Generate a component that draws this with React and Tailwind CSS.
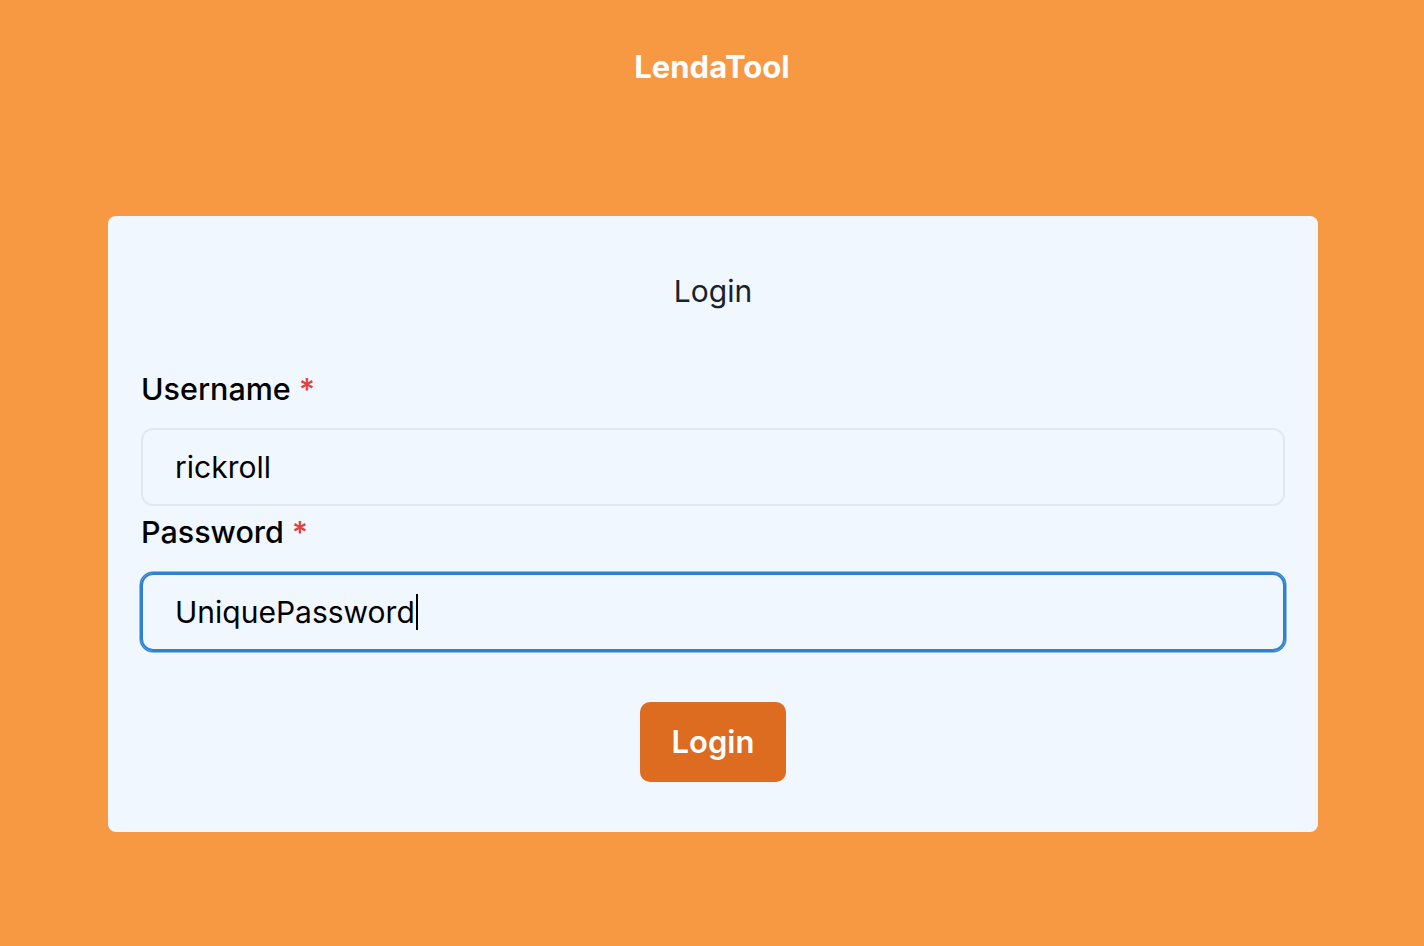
export default function App() {
  const font = { fontFamily: 'Inter, "Noto Sans", sans-serif' };
  return (
    <div className="min-h-screen w-full bg-[#F79843] flex flex-col" style={font}>
      <header className="h-[132px] w-full flex items-center justify-center">
        <h1 className="text-[31px] font-bold text-white leading-none">LendaTool</h1>
      </header>
      <main className="w-full mt-[84px]">
        <div className="ml-[108px] w-[1210px] bg-[#F0F7FF] rounded-lg px-[33px] pt-[54px] pb-[50px] flex flex-col">
          <h2 className="text-center text-[30px] leading-[42px] text-[#1A202C] font-normal">Login</h2>
          <form className="mt-[57px] flex flex-col" onSubmit={(e) => e.preventDefault()}>
            <label className="text-[30.5px] leading-[40px] font-medium text-black mb-[19px]">
              Username <span className="text-[#E53E3E]">*</span>
            </label>
            <input
              readOnly
              value="rickroll"
              className="h-[78px] w-full rounded-xl border-2 border-[#E2E8F0] bg-transparent px-[32px] text-[30px] text-black outline-none"
            />
            <label className="text-[30.5px] leading-[40px] font-medium text-black mt-[6px] mb-[21px]">
              Password <span className="text-[#E53E3E]">*</span>
            </label>
            <div className="h-[78px] w-full rounded-xl border-2 border-[#3182CE] shadow-[0_0_0_1.5px_#3182CE] px-[32px] flex items-center text-[30px] text-black">
              <span>UniquePassword</span>
              <span className="inline-block w-[2px] h-[36px] bg-black ml-[1px]"></span>
            </div>
            <div className="flex justify-center mt-[51px]">
              <button
                type="submit"
                className="h-[80px] px-[32px] rounded-[10px] bg-[#DD6B20] text-white text-[31px] font-semibold"
              >
                Login
              </button>
            </div>
          </form>
        </div>
      </main>
    </div>
  );
}
